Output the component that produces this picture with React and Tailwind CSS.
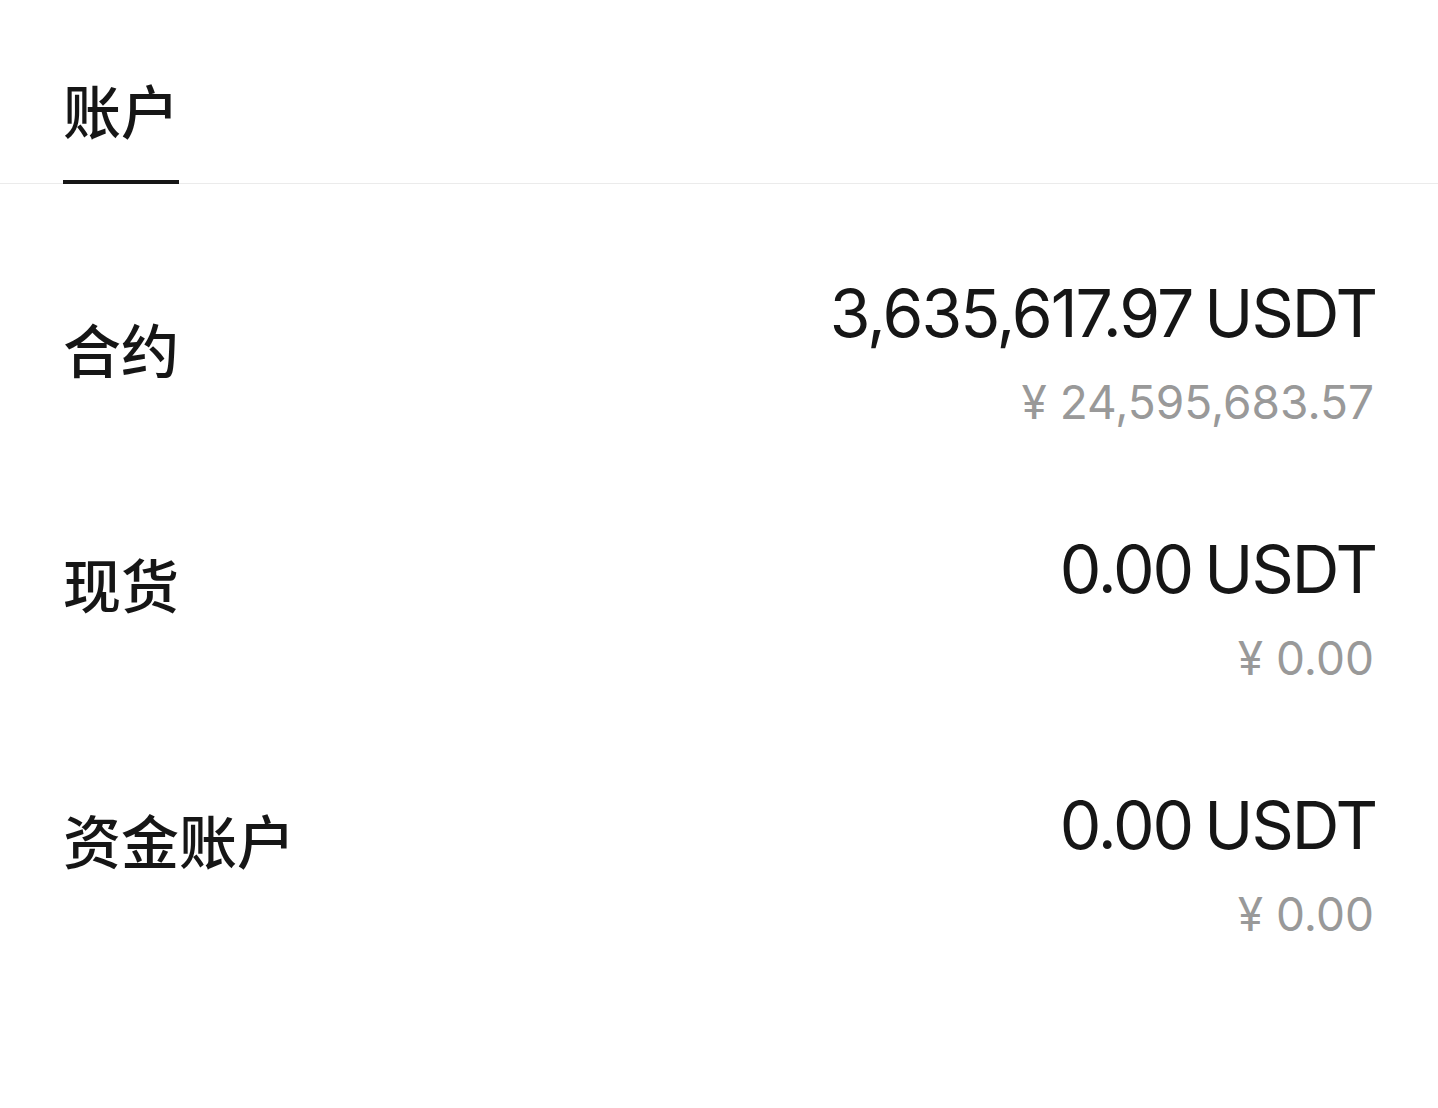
const rows = [
  { name: '合约', amount: '3,635,617.97', cny: '24,595,683.57', shift: false },
  { name: '现货', amount: '0.00', cny: '0.00', shift: true },
  { name: '资金账户', amount: '0.00', cny: '0.00', shift: true },
]

function AccountRow({ name, amount, cny, shift }) {
  return (
    <div className="h-[256px] flex items-center justify-between">
      {/* label is lifted a bit on the lower rows */}
      <div
        className={
          'text-[58px] leading-[70px] font-medium text-[#161616] font-["Noto_Sans_CJK_SC",sans-serif] ' +
          (shift ? 'mb-[50px]' : 'mb-[8px]')
        }
      >
        {name}
      </div>
      <div className="flex flex-col items-end font-['Inter','Noto_Sans_CJK_SC',sans-serif]">
        <div className="flex items-baseline gap-[12px] text-[66px] leading-[80px] text-[#161616] tracking-[-2px]">
          <span>{amount}</span>
          <span>USDT</span>
        </div>
        <div className="mt-[19px] mr-[2px] text-[46px] leading-[60px] text-[#999999]">
          ¥ {cny}
        </div>
      </div>
    </div>
  )
}

export default function App() {
  return (
    <div className="min-h-screen bg-white">
      {/* Tab header */}
      <div className="border-b border-[#ebebeb] px-[63px] pt-[74px]">
        <div className="inline-flex flex-col">
          <div className="text-[58px] leading-[70px] font-medium text-[#161616] font-['Noto_Sans_CJK_SC',sans-serif]">
            账户
          </div>
          <div className="mt-[36px] h-[4px] bg-[#161616] -mb-px" />
        </div>
      </div>

      {/* Account list */}
      <div className="pt-[40px] pl-[63px] pr-[62px]">
        {rows.map((r) => (
          <AccountRow key={r.name} {...r} />
        ))}
      </div>
    </div>
  )
}
